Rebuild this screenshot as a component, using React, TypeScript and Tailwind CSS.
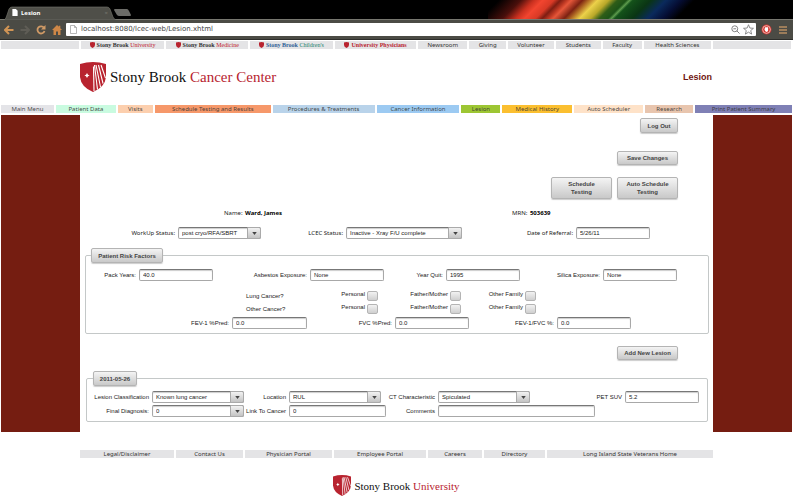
import { ReactNode } from 'react';

const sans = "font-['Liberation_Sans',Arial,sans-serif]";
const control =
  "h-3 w-full min-w-0 appearance-none rounded-[2px] border border-[#a8a8a8] border-t-[#777] bg-white px-[3px] font-['Liberation_Sans',Arial,sans-serif] text-[6px] leading-[8px] text-[#222] shadow-[inset_0_1px_1px_#ccc] outline-none";
const raised =
  "rounded-[2px] border border-[#b4b4b4] bg-linear-to-b from-[#f4f4f4] to-[#c9c9c9] font-['Liberation_Sans',Arial,sans-serif] text-[6px] leading-[8px] font-bold text-[#444] shadow-[0_1px_1px_#ccc]";

function Shield({ className }: { className: string }) {
  return (
    <svg viewBox="0 0 26 30" className={className} aria-hidden="true">
      <path d="M0 2Q13-2 26 2V15Q25 25 13 30Q1 25 0 15Z" fill="#b8232f" />
      <g stroke="#fff" strokeWidth="1.1" fill="none">
        <path d="M13.5 4.5L14 29" />
        <path d="M14.5 3L17.5 27.5" />
        <path d="M16 3L20.5 25" />
        <path d="M18.5 3L23 21.5" />
        <path d="M21 3L25.5 16" />
      </g>
      <path d="M7 11L8 12.8L9.6 13.5L8 14.2L7 16L6 14.2L4.4 13.5L6 12.8Z" fill="#fff" />
    </svg>
  );
}

function BrowserChrome() {
  return (
    <header className="bg-[#4b4b45]">
      <div className="relative flex h-5 items-end border-b border-[#77776f] bg-black">
        <svg viewBox="0 0 220 19" preserveAspectRatio="none" className="absolute top-0 right-[85px] h-[19px] w-[220px]" aria-hidden="true">
          <defs>
            <linearGradient id="aurora" gradientUnits="userSpaceOnUse" x1="0" y1="0" x2="220" y2="0" gradientTransform="skewX(-45)">
              <stop offset="0.05" stopColor="#000" />
              <stop offset="0.15" stopColor="#4a0f0b" />
              <stop offset="0.21" stopColor="#c9301f" />
              <stop offset="0.25" stopColor="#f2452f" />
              <stop offset="0.3" stopColor="#d93a26" />
              <stop offset="0.33" stopColor="#7d1d12" />
              <stop offset="0.36" stopColor="#c03a24" />
              <stop offset="0.38" stopColor="#e5573a" />
              <stop offset="0.43" stopColor="#7c2112" />
              <stop offset="0.46" stopColor="#b06a24" />
              <stop offset="0.5" stopColor="#ecd14a" />
              <stop offset="0.55" stopColor="#b9a829" />
              <stop offset="0.59" stopColor="#2f5d18" />
              <stop offset="0.63" stopColor="#1c5318" />
              <stop offset="0.645" stopColor="#5c9a4c" />
              <stop offset="0.66" stopColor="#14521a" />
              <stop offset="0.74" stopColor="#0a3514" />
              <stop offset="0.81" stopColor="#0a2a5c" />
              <stop offset="0.88" stopColor="#050d33" />
              <stop offset="0.94" stopColor="#000" />
            </linearGradient>
          </defs>
          <rect width="220" height="19" fill="url(#aurora)" />
        </svg>
        <svg viewBox="0 0 132 14" className="absolute bottom-[-1px] left-1 h-[14px] w-[132px]" aria-hidden="true">
          <path d="M0 14Q2 13 3 9L5 3Q6 1 8 1H103Q105 1 106 3L109 11Q110 13 112 14Z" fill="#4f4f49" stroke="#77776f" strokeWidth="0.6" />
          <path d="M111 3H123Q124 3 125 5L127 9Q127 10 126 10H115Q114 10 113 9L110 4Q110 3 111 3Z" fill="#6c6c68" />
        </svg>
        <div className="relative flex h-[13px] items-center pl-3">
          <svg viewBox="0 0 6 8" className="h-[7px] w-[6px]" aria-hidden="true">
            <path d="M0 0H4L6 2V8H0Z" fill="#fff" />
          </svg>
          <span className="pl-[3px] font-['Noto_Sans',sans-serif] text-[6px] leading-[8px] font-bold text-white">Lesion</span>
          <span className="pl-16 text-[6px] leading-[8px] text-[#77776f]">×</span>
        </div>
      </div>
      <div className="flex h-[19px] items-center pr-[6px] pl-1">
        <div className="flex items-center gap-[6px]">
          <button aria-label="Back" className="h-[10px] w-[10px]">
            <svg viewBox="0 0 10 10"><path d="M5 1L1 5L5 9M1.5 5H9.5" fill="none" stroke="#d09455" strokeWidth="2" /></svg>
          </button>
          <button aria-label="Forward" className="h-[10px] w-[10px]">
            <svg viewBox="0 0 10 10"><path d="M5 1L9 5L5 9M8.5 5H.5" fill="none" stroke="#5f5d56" strokeWidth="2" /></svg>
          </button>
          <button aria-label="Reload" className="h-[10px] w-[10px]">
            <svg viewBox="0 0 10 10"><path d="M8 2.8A3.6 3.6 0 1 0 8.5 6" fill="none" stroke="#d09a66" strokeWidth="1.8" /><path d="M9.5 0V4.5H5Z" fill="#d09a66" /></svg>
          </button>
          <button aria-label="Home" className="h-[10px] w-[10px]">
            <svg viewBox="0 0 10 10"><path d="M5 0L6.8 1.8V.8H8.3V3.3L10 5H8.5V10H6V6.5H4V10H1.5V5H0Z" fill="#cf8747" /></svg>
          </button>
        </div>
        <div className="ml-[4px] flex h-[13px] flex-1 items-center rounded-[1px] bg-white pr-[2px] pl-[4px]">
          <svg viewBox="0 0 7 9" className="h-[9px] w-[7px]" aria-hidden="true">
            <path d="M.5 .5H4.5L6.5 2.5V8.5H.5ZM4.5 .5V2.5H6.5" fill="#fff" stroke="#999" strokeWidth="0.7" />
          </svg>
          <input
            aria-label="Address"
            defaultValue="localhost:8080/lcec-web/Lesion.xhtml"
            className="h-[11px] min-w-0 flex-1 bg-transparent pl-[4px] font-['DejaVu_Sans',sans-serif] text-[7px] leading-[11px] text-[#444] outline-none"
          />
          <svg viewBox="0 0 10 10" className="h-[9px] w-[9px]" fill="none" stroke="#777" aria-hidden="true">
            <circle cx="4.2" cy="4.2" r="3.3" /><path d="M6.5 6.5L9.5 9.5M2.7 4.2H5.7" />
          </svg>
          <svg viewBox="0 0 12 12" className="ml-[3px] h-[11px] w-[11px]" fill="none" stroke="#777" strokeWidth="0.9" aria-hidden="true">
            <path d="M6 .8L7.5 4.4L11.4 4.7L8.4 7.2L9.4 11L6 8.9L2.6 11L3.6 7.2L.6 4.7L4.5 4.4Z" />
          </svg>
        </div>
        <svg viewBox="0 0 12 12" className="ml-[5px] h-[11px] w-[11px]" aria-hidden="true">
          <circle cx="6" cy="6" r="5.4" fill="#d3352e" />
          <circle cx="6" cy="6" r="4.2" fill="none" stroke="#f4dcd8" strokeWidth="0.8" />
          <path d="M4.4 3.6H7.8V7Q7.4 8.6 6 8.6Q4.6 8.6 3.8 6.4Z" fill="#fff" />
        </svg>
        <svg viewBox="0 0 8 8" className="ml-[7px] h-2 w-2" aria-hidden="true">
          <path d="M0 1H8M0 4H8M0 7H8" stroke="#b98f62" strokeWidth="1.6" />
        </svg>
      </div>
      <div className="h-px bg-[#2e2e2b]" />
    </header>
  );
}

const brand = "flex items-center justify-center gap-[2px] bg-[#e4e4e6] font-['Liberation_Serif',serif] text-[6px] leading-[8px] whitespace-nowrap";
const plain = "flex items-center justify-center bg-[#e4e4e6] font-['Noto_Sans',sans-serif] text-[6px] leading-[8px] whitespace-nowrap text-[#333]";

function Brand({ first, second, a, b }: { first: string; second: string; a: string; b: string }) {
  return (
    <a href="#" className={brand}>
      <svg viewBox="0 0 5 6" className="h-[6px] w-[5px]" aria-hidden="true">
        <path d="M0 .5Q2.500-.5 5 .5V3Q5 5 2.500 6Q0 5 0 3Z" fill="#b8232f" />
      </svg>
      <span>
        <span className={a}>{first} </span>
        <span className={b}>{second}</span>
      </span>
    </a>
  );
}

function SiteLinks() {
  return (
    <nav aria-label="University" className="mt-px mr-[2px] ml-px grid h-2 grid-cols-[78fr_84fr_82fr_83fr_82fr_49fr_37fr_46fr_45fr_39fr_68fr_78fr] gap-[2px]">
      <span className="bg-[#e4e4e6]" />
      <Brand first="Stony Brook" second="University" a="font-bold text-[#333]" b="text-[#c0202c]" />
      <Brand first="Stony Brook" second="Medicine" a="font-bold text-[#333]" b="text-[#c0202c]" />
      <Brand first="Stony Brook" second="Children's" a="font-bold text-[#2d5f96]" b="text-[#23836c]" />
      <Brand first="University" second="Physicians" a="font-bold text-[#b8232f]" b="font-bold text-[#b8232f]" />
      {['Newsroom', 'Giving', 'Volunteer', 'Students', 'Faculty', 'Health Sciences'].map((t) => (
        <a key={t} href="#" className={plain}>{t}</a>
      ))}
      <span className="bg-[#e4e4e6]" />
    </nav>
  );
}

const tabs: [string, string][] = [
  ['Main Menu', 'bg-[#e4e4e8]'],
  ['Patient Data', 'bg-[#c9fbe0]'],
  ['Visits', 'bg-[#fccfae]'],
  ['Schedule Testing and Results', 'bg-[#f6986a]'],
  ['Procedures & Treatments', 'bg-[#b9d3ea]'],
  ['Cancer Information', 'bg-[#9ccaf2]'],
  ['Lesion', 'bg-[#9dc633]'],
  ['Medical History', 'bg-[#fbbf30]'],
  ['Auto Scheduler', 'bg-[#fee2c8]'],
  ['Research', 'bg-[#e8c5ae]'],
  ['Print Patient Summary', 'bg-[#7f80b5]'],
];

function MainTabs() {
  return (
    <nav aria-label="Main" className="mr-px ml-px grid h-2 grid-cols-[53fr_60fr_35fr_116fr_102fr_83fr_39fr_70fr_69fr_48fr_97fr] gap-[2px]">
      {tabs.map(([t, bg]) => (
        <a key={t} href="#" className={`flex items-center justify-center font-['Noto_Sans',sans-serif] text-[6px] leading-[8px] whitespace-nowrap text-[#333]/90 ${bg}`}>{t}</a>
      ))}
    </nav>
  );
}

function Label({ id, wide, children }: { id: string; wide?: boolean; children: ReactNode }) {
  return (
    <label
      htmlFor={id}
      className={`pr-[3px] text-right text-[6px] leading-[8px] whitespace-nowrap text-[#222] ${wide ? "font-['Noto_Sans',sans-serif]" : sans}`}
    >
      {children}
    </label>
  );
}

function Field({ id, label, value, wide }: { id: string; label: string; value: string; wide?: boolean }) {
  return (
    <>
      <Label id={id} wide={wide}>{label}</Label>
      <input id={id} defaultValue={value} className={control} />
    </>
  );
}

function Choice({ id, label, value, wide }: { id: string; label: string; value: string; wide?: boolean }) {
  return (
    <>
      <Label id={id} wide={wide}>{label}</Label>
      <div className="relative h-3">
        <select id={id} className={`${control} block`}>
          <option>{value}</option>
        </select>
        <span className="pointer-events-none absolute inset-y-0 right-0 flex w-[14px] items-center justify-center rounded-r-[2px] border border-[#aaa] bg-linear-to-b from-[#f2f2f2] to-[#c4c4c4]">
          <svg viewBox="0 0 6 4" className="h-[3px] w-[5px]" aria-hidden="true"><path d="M0 0H6L3 4Z" fill="#444" /></svg>
        </span>
      </div>
    </>
  );
}

function Tick({ id, label }: { id: string; label: string }) {
  return (
    <>
      <label htmlFor={id} className={`pr-[2px] pb-[3px] text-right text-[6px] leading-[8px] whitespace-nowrap text-[#222] ${sans}`}>{label}</label>
      <input id={id} type="checkbox" className="h-[10px] w-[11px] appearance-none rounded-[2px] border border-[#b4b4b4] bg-linear-to-b from-[#f2f2f2] to-[#cfcfcf]" />
    </>
  );
}

function History({ id, name }: { id: string; name: string }) {
  return (
    <div className="grid h-[13px] grid-cols-[160fr_60fr_61fr_11fr_72fr_11fr_64fr_11fr_172fr] items-center">
      <span />
      <span className={`text-[6px] leading-[8px] whitespace-nowrap text-[#222] ${sans}`}>{name}</span>
      <Tick id={`${id}-personal`} label="Personal" />
      <Tick id={`${id}-parent`} label="Father/Mother" />
      <Tick id={`${id}-family`} label="Other Family" />
    </div>
  );
}

export default function App() {
  return (
    <div className="bg-white font-['Noto_Sans',sans-serif]">
      <BrowserChrome />
      <SiteLinks />
      <div className="flex h-14 items-center justify-between pr-[81px] pl-[80px]">
        <a href="#" className="flex items-center gap-[4px] font-['Liberation_Serif',serif] text-[15px] leading-5 text-[#111]">
          <Shield className="h-[30px] w-[26px]" />
          <span>Stony Brook <span className="text-[#b8232f]">Cancer Center</span></span>
        </a>
        <h1 className={`text-[9px] leading-3 font-bold text-[#701510] ${sans}`}>Lesion</h1>
      </div>
      <MainTabs />
      <div className="mt-[2px] mr-px ml-px bg-[#751d11] px-[79px]">
        <form className="bg-white pt-[3px] pr-[4px] pb-[10px] pl-[5px]" onSubmit={(e) => e.preventDefault()}>
          <div className="flex flex-col items-end pr-[31px]">
            <button type="button" className={`h-[15px] w-[38px] ${raised}`}>Log Out</button>
            <button type="button" className={`mt-[18px] h-[14px] w-[61px] ${raised}`}>Save Changes</button>
            <div className="mt-3 flex gap-[5px]">
              <button type="button" className={`h-[22px] w-[61px] px-2 ${raised}`}>Schedule Testing</button>
              <button type="button" className={`h-[22px] w-[61px] px-1 ${raised}`}>Auto Schedule Testing</button>
            </div>
          </div>
          <div className="mt-[10px] grid grid-cols-[139fr_288fr_197fr] text-[6px] leading-[8px] whitespace-nowrap text-[#222]">
            <span />
            <span>Name: <b className="pl-px text-black">Ward, James</b></span>
            <span>MRN: <b className="pl-px text-black">503639</b></span>
          </div>
          <div className="mt-[10px] grid grid-cols-[93fr_83fr_85fr_116fr_114fr_74fr_59fr] items-center">
            <Choice id="workup" label="WorkUp Status:" value="post cryo/RFA/SBRT" wide />
            <Choice id="lcec" label="LCEC Status:" value="Inactive - Xray F/U complete" wide />
            <Field id="referral" label="Date of Referral:" value="5/26/11" wide />
          </div>
          <fieldset className="mt-[9px] rounded-[2px] border border-[#c4c8c8] pb-1">
            <legend className="ml-[5px]">
              <button type="button" className={`block h-[15px] w-[72px] ${raised}`}>Patient Risk Factors</button>
            </legend>
            <div className="mt-[6px] grid grid-cols-[53fr_74fr_97fr_74fr_62fr_74fr_83fr_74fr_31fr] items-center">
              <Field id="pack" label="Pack Years:" value="40.0" />
              <Field id="asbestos" label="Asbestos Exposure:" value="None" />
              <Field id="quit" label="Year Quit:" value="1995" />
              <Field id="silica" label="Silica Exposure:" value="None" />
            </div>
            <div className="mt-2">
              <History id="lung" name="Lung Cancer?" />
              <History id="other" name="Other Cancer?" />
            </div>
            <div className="mt-[2px] grid grid-cols-[146fr_75fr_88fr_74fr_88fr_74fr_77fr] items-center">
              <Field id="fev" label="FEV-1 %Pred:" value="0.0" />
              <Field id="fvc" label="FVC %Pred:" value="0.0" />
              <Field id="ratio" label="FEV-1/FVC %:" value="0.0" />
            </div>
          </fieldset>
          <div className="mt-3 flex justify-end pr-[31px]">
            <button type="button" className={`h-[14px] w-[61px] ${raised}`}>Add New Lesion</button>
          </div>
          <fieldset className="mt-[11px] mr-px ml-px rounded-[2px] border border-[#c4c8c8] pb-1">
            <legend className="ml-[6px]">
              <button type="button" className={`block h-[15px] w-[44px] ${raised}`}>2011-05-26</button>
            </legend>
            <div className="mt-[5px] grid grid-cols-[65fr_92fr_45fr_92fr_57fr_92fr_95fr_74fr_8fr] items-center gap-y-[2px]">
              <Choice id="class" label="Lesion Classification" value="Known lung cancer" />
              <Choice id="location" label="Location" value="RUL" />
              <Choice id="ct" label="CT Characteristic" value="Spiculated" />
              <Field id="pet" label="PET SUV" value="5.2" />
              <span />
              <Choice id="diagnosis" label="Final Diagnosis:" value="0" />
              <Label id="link">Link To Cancer</Label>
              <div className="col-span-2 grid grid-cols-[97fr_52fr] items-center">
                <input id="link" defaultValue="0" className={control} />
                <Label id="comments">Comments</Label>
              </div>
              <div className="col-span-2 pr-[30px]">
                <input id="comments" className={`${control} block`} />
              </div>
            </div>
          </fieldset>
        </form>
      </div>
      <footer className="pt-[18px]">
        <nav aria-label="Footer" className="mr-[80px] ml-[80px] grid h-2 grid-cols-[94fr_67fr_87fr_92fr_54fr_61fr_166fr] gap-[2px]">
          {['Legal/Disclaimer', 'Contact Us', 'Physician Portal', 'Employee Portal', 'Careers', 'Directory', 'Long Island State Veterans Home'].map((t) => (
            <a key={t} href="#" className={plain}>{t}</a>
          ))}
        </nav>
        <a href="#" className="mt-[17px] flex items-center justify-center gap-[3px] font-['Liberation_Serif',serif] text-[11px] leading-5 text-[#111]">
          <Shield className="h-[21px] w-[18px]" />
          <span>Stony Brook <span className="text-[#b8232f]">University</span></span>
        </a>
      </footer>
    </div>
  );
}
